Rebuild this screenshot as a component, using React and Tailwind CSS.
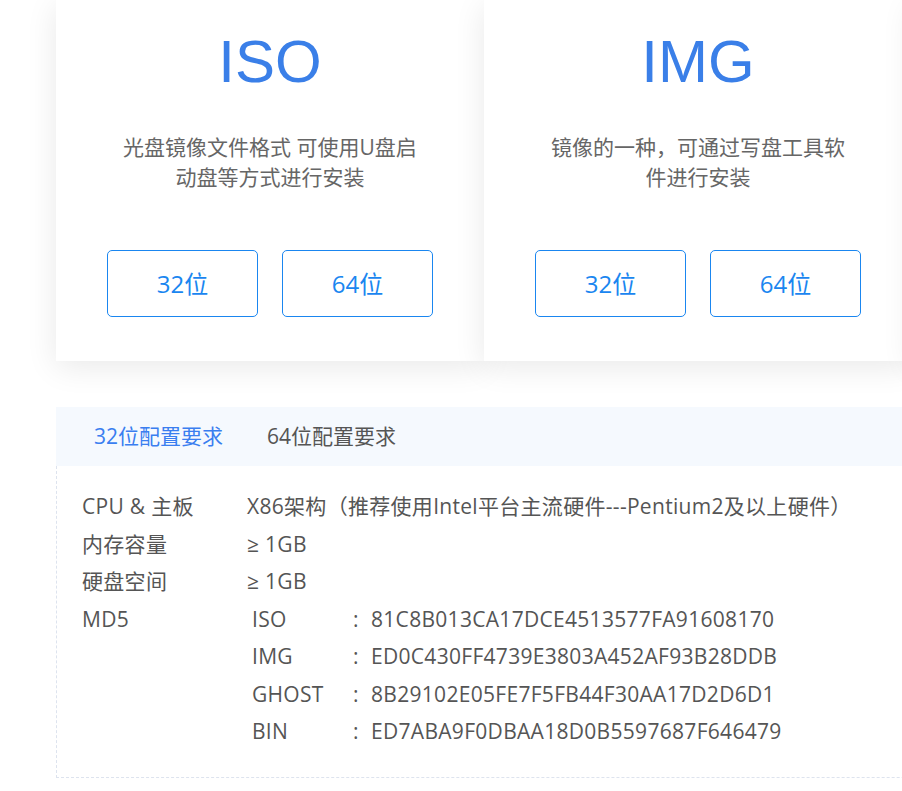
import React from 'react'

const cards = [
  { title: 'ISO', desc: '光盘镜像文件格式 可使用U盘启动盘等方式进行安装' },
  { title: 'IMG', desc: '镜像的一种，可通过写盘工具软件进行安装' },
]

const md5 = [
  ['ISO', '81C8B013CA17DCE4513577FA91608170'],
  ['IMG', 'ED0C430FF4739E3803A452AF93B28DDB'],
  ['GHOST', '8B29102E05FE7F5FB44F30AA17D2D6D1'],
  ['BIN', 'ED7ABA9F0DBAA18D0B5597687F646479'],
]

function Card({ title, desc }) {
  return (
    <div className="w-[428px] shrink-0 bg-white shadow-[0_6px_30px_rgba(0,0,0,0.09)] flex flex-col items-center pt-[32px] pb-[44px]">
      <h2 className="text-[60px] leading-[60px] text-[#3a7fe8] font-['Liberation_Sans',Arial,sans-serif]">
        {title}
      </h2>
      <p className="w-[300px] mt-[40px] text-center text-[21px] leading-[30px] text-[#666]">
        {desc}
      </p>
      <div className="flex gap-[24px] mt-[58px]">
        <button className="w-[151px] h-[67px] border border-[#1a86f0] rounded-[5px] text-[24px] text-[#1a86f0]">
          32位
        </button>
        <button className="w-[151px] h-[67px] border border-[#1a86f0] rounded-[5px] text-[24px] text-[#1a86f0]">
          64位
        </button>
      </div>
    </div>
  )
}

export default function App() {
  return (
    <div className="w-full h-[791px] overflow-hidden bg-white font-['Open_Sans','Noto_Sans_CJK_SC',sans-serif]">
      <div className="ml-[56px] w-[1284px]">
        <div className="flex">
          {cards.map((c) => (
            <Card key={c.title} {...c} />
          ))}
          {/* next card, off screen: only its shadow shows */}
          <div className="w-[428px] shrink-0 bg-white shadow-[0_6px_30px_rgba(0,0,0,0.09)]" />
        </div>

        <div className="mt-[46px] h-[59px] bg-[#f5f9fe] flex items-center pl-[38px] gap-[44px] text-[21px]">
          <span className="text-[#3a7ef0]">32位配置要求</span>
          <span className="text-[#555]">64位配置要求</span>
        </div>

        <div className="border border-dashed border-t-0 border-[#dde3ee] pl-[25px] pt-[22px] pb-[26px] text-[21px] leading-[37.5px] tracking-[0.3px] text-[#555]">
          <div className="flex">
            <span className="w-[165px] shrink-0">CPU &amp; 主板</span>
            <span>X86架构（推荐使用Intel平台主流硬件---Pentium2及以上硬件）</span>
          </div>
          <div className="flex">
            <span className="w-[165px] shrink-0">内存容量</span>
            <span>≥ 1GB</span>
          </div>
          <div className="flex">
            <span className="w-[165px] shrink-0">硬盘空间</span>
            <span>≥ 1GB</span>
          </div>
          <div className="flex">
            <span className="w-[170px] shrink-0">MD5</span>
            <div>
              {md5.map(([k, v]) => (
                <div key={k} className="flex">
                  <span className="w-[101px]">{k}</span>
                  <span className="w-[18px]">:</span>
                  <span>{v}</span>
                </div>
              ))}
            </div>
          </div>
        </div>
      </div>
    </div>
  )
}
